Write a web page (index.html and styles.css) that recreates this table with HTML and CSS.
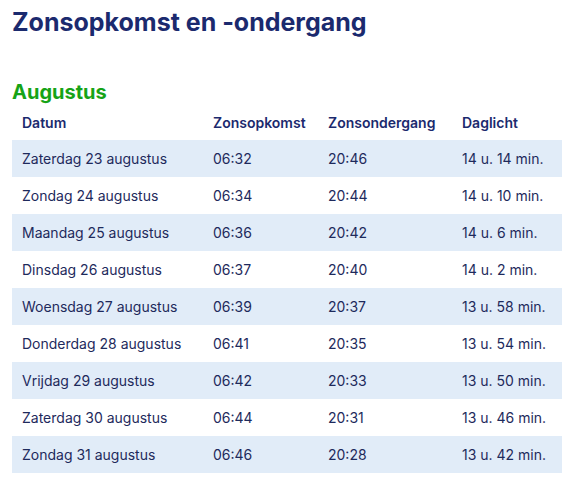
FILE: index.html
```html
<!DOCTYPE html>
<html lang="nl">
<head>
<meta charset="utf-8">
<link rel="stylesheet" href="styles.css">
</head>
<body>
<h1 class="title">Zonsopkomst en -ondergang</h1>
<h2 class="month">Augustus</h2>
<table class="sun">
<thead>
<tr><th class="c1">Datum</th><th class="c2">Zonsopkomst</th><th class="c3">Zonsondergang</th><th class="c4">Daglicht</th></tr>
</thead>
<tbody>
<tr><td>Zaterdag 23 augustus</td><td>06:32</td><td>20:46</td><td>14 u. 14 min.</td></tr>
<tr><td>Zondag 24 augustus</td><td>06:34</td><td>20:44</td><td>14 u. 10 min.</td></tr>
<tr><td>Maandag 25 augustus</td><td>06:36</td><td>20:42</td><td>14 u. 6 min.</td></tr>
<tr><td>Dinsdag 26 augustus</td><td>06:37</td><td>20:40</td><td>14 u. 2 min.</td></tr>
<tr><td>Woensdag 27 augustus</td><td>06:39</td><td>20:37</td><td>13 u. 58 min.</td></tr>
<tr><td>Donderdag 28 augustus</td><td>06:41</td><td>20:35</td><td>13 u. 54 min.</td></tr>
<tr><td>Vrijdag 29 augustus</td><td>06:42</td><td>20:33</td><td>13 u. 50 min.</td></tr>
<tr><td>Zaterdag 30 augustus</td><td>06:44</td><td>20:31</td><td>13 u. 46 min.</td></tr>
<tr><td>Zondag 31 augustus</td><td>06:46</td><td>20:28</td><td>13 u. 42 min.</td></tr>
</tbody>
</table>
</body>
</html>
```
FILE: styles.css
```css
body {
  margin: 0;
  padding: 0 12px;
  font-family: Inter, "Noto Sans", sans-serif;
  color: #1e2a5c;
  background: #fff;
}
.title {
  margin: 0;
  padding-top: 6px;
  font-size: 25px;
  line-height: 32px;
  font-weight: 700;
  color: #1b2a6e;
}
.month {
  margin: 42px 0 0;
  font-size: 20px;
  line-height: 24px;
  font-weight: 700;
  color: #16a316;
}
.sun {
  border-collapse: collapse;
  width: 550px;
  font-size: 14px;
}
.sun th {
  text-align: left;
  font-weight: 600;
  height: 36px;
  padding: 0 10px;
  color: #1b2a6e;
}
.sun td {
  height: 37px;
  padding: 0 10px;
  line-height: 17px;
}
.sun tbody tr:nth-child(odd) {
  background: #e1ecf8;
}
.c1 { width: 171px; }
.c2 { width: 95px; }
.c3 { width: 114px; }
.c4 { width: 90px; }
```
